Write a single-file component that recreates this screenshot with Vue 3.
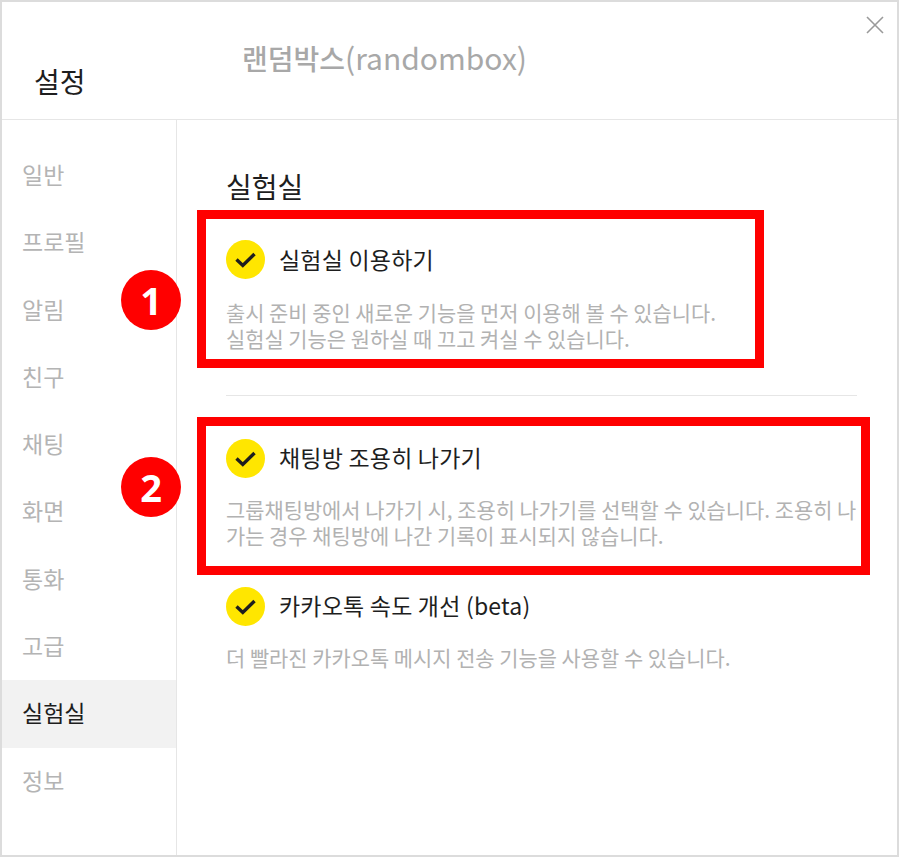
<template>
  <div class="window">
    <header class="top">
      <h1>설정</h1>
      <span class="account">랜덤박스<span class="account-id">(randombox)</span></span>
      <svg class="close" width="18" height="18" viewBox="0 0 18 18">
        <path d="M1 1L17 17M17 1L1 17" stroke="#9a9a9a" stroke-width="1.6" fill="none" />
      </svg>
    </header>
    <div class="body">
      <nav class="side">
        <div v-for="item in menu" :key="item" class="nav-item" :class="{ active: item === '실험실' }">{{ item }}</div>
      </nav>
      <main class="content">
        <h2>실험실</h2>
        <section v-for="opt in options" :key="opt.title" class="option" :class="opt.cls">
          <div class="opt-head">
            <svg class="check" width="39" height="39" viewBox="0 0 39 39">
              <circle cx="19.5" cy="19.5" r="19.5" fill="#ffe600" />
              <path d="M10.5 19.5L16.8 25.5L28.5 14" stroke="#1e1e1e" stroke-width="3.4" fill="none" />
            </svg>
            <span class="opt-title">{{ opt.title }}</span>
          </div>
          <p class="desc">
            <span v-for="(line, i) in opt.lines" :key="i" class="line">{{ line }}</span>
          </p>
        </section>
      </main>
    </div>

    <div class="mark mark-1"></div>
    <div class="mark mark-2"></div>
    <div class="badge badge-1">1</div>
    <div class="badge badge-2">2</div>
  </div>
</template>

<script setup>
const menu = ['일반', '프로필', '알림', '친구', '채팅', '화면', '통화', '고급', '실험실', '정보']

const options = [
  {
    cls: 'opt-lab',
    title: '실험실 이용하기',
    lines: ['출시 준비 중인 새로운 기능을 먼저 이용해 볼 수 있습니다.', '실험실 기능은 원하실 때 끄고 켜실 수 있습니다.'],
  },
  {
    cls: 'opt-leave',
    title: '채팅방 조용히 나가기',
    lines: ['그룹채팅방에서 나가기 시, 조용히 나가기를 선택할 수 있습니다. 조용히 나', '가는 경우 채팅방에 나간 기록이 표시되지 않습니다.'],
  },
  {
    cls: 'opt-speed',
    title: '카카오톡 속도 개선 (beta)',
    lines: ['더 빨라진 카카오톡 메시지 전송 기능을 사용할 수 있습니다.'],
  },
]
</script>

<style>
html, body {
  margin: 0;
  background: #fff;
}
</style>

<style scoped>
.window {
  position: relative;
  box-sizing: border-box;
  width: 899px;
  height: 857px;
  border: 2px solid #dcdcdc;
  background: #fff;
  overflow: hidden;
  font-family: "Noto Sans CJK KR", "Noto Sans", sans-serif;
  color: #1e1e1e;
}
.top {
  position: relative;
  box-sizing: border-box;
  height: 118px;
  border-bottom: 1px solid #e6e6e6;
}
h1 {
  position: absolute;
  left: 32px;
  top: 59px;
  margin: 0;
  font-size: 28px;
  line-height: 40px;
  font-weight: 400;
}
.account {
  position: absolute;
  left: 240px;
  top: 35px;
  font-size: 28px;
  line-height: 40px;
  font-weight: 500;
  color: #a8a8a8;
}
.account-id {
  font-size: 30px;
  font-weight: 400;
}
.close {
  position: absolute;
  right: 13px;
  top: 14px;
}
.body {
  display: flex;
  height: 735px;
}
.side {
  box-sizing: border-box;
  width: 175px;
  padding-top: 22px;
  border-right: 1px solid #e6e6e6;
}
.nav-item {
  height: 67.3px;
  line-height: 65.3px;
  padding-left: 20px;
  font-size: 23px;
  color: #b4b4b4;
}
.nav-item.active {
  background: #f2f2f2;
  color: #1e1e1e;
}
.content {
  flex: 1;
  padding: 45px 40px 0 49px;
}
h2 {
  margin: 0;
  font-size: 28px;
  line-height: 42px;
  font-weight: 400;
}
.option {
  display: flex;
  flex-direction: column;
}
.opt-lab {
  margin-top: 32px;
  padding-bottom: 44px;
  border-bottom: 1px solid #e6e6e6;
}
.opt-leave {
  margin-top: 42px;
}
.opt-speed {
  margin-top: 38px;
}
.opt-head {
  display: flex;
  align-items: center;
  gap: 14px;
  height: 40px;
}
.opt-title {
  padding-bottom: 3px;
  font-size: 23px;
  letter-spacing: 0.2px;
}
.opt-lab .opt-title {
  padding-bottom: 1px;
}
.desc {
  margin: 20px 0 0;
  font-size: 20.9px;
  line-height: 26px;
  color: #b2b2b2;
  white-space: nowrap;
}
.opt-leave .desc,
.opt-speed .desc {
  margin-top: 18px;
}
.line {
  display: block;
}
.mark {
  position: absolute;
  box-sizing: border-box;
  border: 9px solid #ff0000;
}
.mark-1 {
  left: 195px;
  top: 208px;
  width: 567px;
  height: 158px;
}
.mark-2 {
  left: 195px;
  top: 415px;
  width: 673px;
  height: 158px;
}
.badge {
  position: absolute;
  left: 119px;
  width: 60px;
  height: 60px;
  border-radius: 50%;
  background: #ff0000;
  color: #fff;
  font-family: "Noto Sans", sans-serif;
  font-weight: 700;
  font-size: 38px;
  line-height: 60px;
  text-align: center;
}
.badge-1 {
  top: 268px;
}
.badge-2 {
  top: 455px;
}
</style>
